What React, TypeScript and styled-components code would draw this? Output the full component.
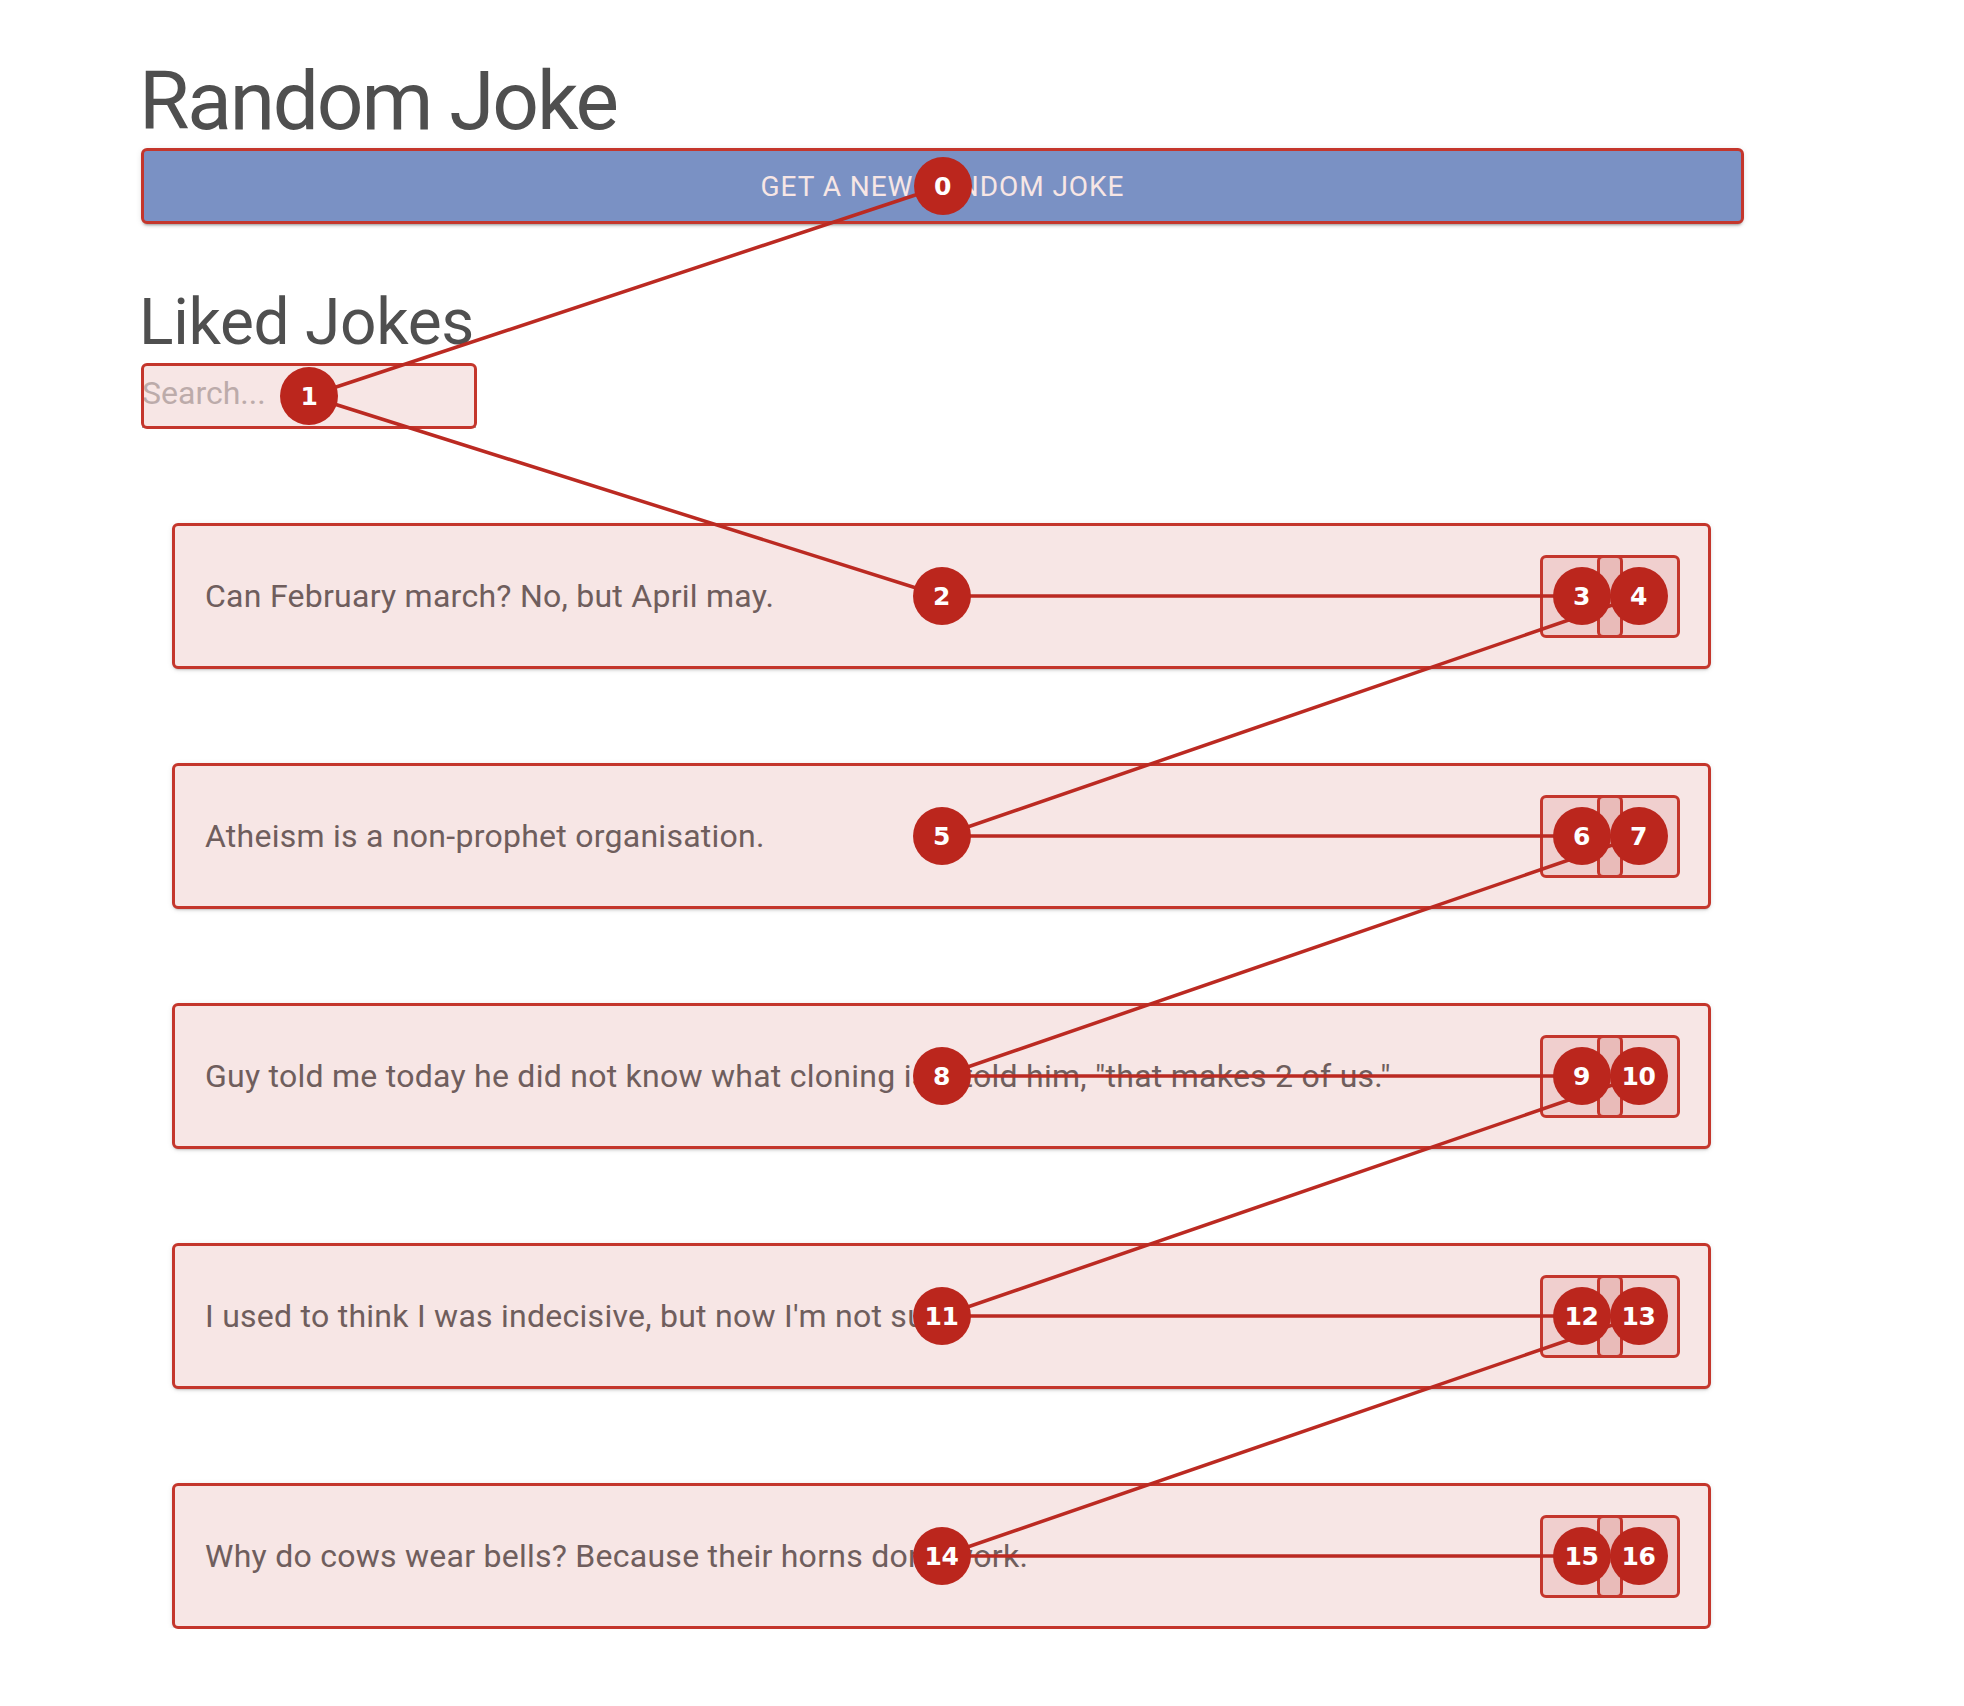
import React, { useLayoutEffect, useRef, useState } from "react";
import styled, { createGlobalStyle } from "styled-components";
import { ThumbsUp, Trash2 } from "lucide-react";

const GlobalStyle = createGlobalStyle`
  html, body { margin: 0; padding: 0; background: #ffffff; }
  body { font-family: Roboto, "Liberation Sans", Arial, sans-serif; }
  * { box-sizing: border-box; }
`;

const Page = styled.main`
  position: relative;
  width: 1743px;
  padding: 54px 0 0 142px;
`;

const Title = styled.h1`
  margin: 0 0 0 -3px;
  font-family: Roboto, "Liberation Sans", sans-serif;
  font-weight: 400;
  font-size: 82px;
  line-height: 95px;
  letter-spacing: -2.2px;
  color: #4f4f4f;
`;

const JokeButton = styled.button`
  display: block;
  width: 100%;
  height: 74px;
  border: 0;
  border-radius: 5px;
  background: #73a0da;
  color: #ffffff;
  font-family: Roboto, "Liberation Sans", sans-serif;
  font-weight: 400;
  font-size: 28px;
  letter-spacing: 0.95px;
  text-transform: uppercase;
  cursor: pointer;
  box-shadow: 0 4px 2px -2px rgba(0, 0, 0, 0.2), 0 3px 3px 0 rgba(0, 0, 0, 0.14),
    0 1px 7px 0 rgba(0, 0, 0, 0.12);
`;

const SectionTitle = styled.h2`
  margin: 62px 0 0 -3px;
  font-family: Roboto, "Liberation Sans", sans-serif;
  font-weight: 400;
  font-size: 64px;
  line-height: 75px;
  letter-spacing: -0.3px;
  color: #4f4f4f;
`;

const SearchField = styled.div`
  margin-top: 4px;
  width: 334px;
  height: 64px;
  border-bottom: 2px solid #a6a6a6;
  display: flex;
  align-items: center;
`;

const SearchInput = styled.input`
  width: 100%;
  height: 100%;
  border: 0;
  outline: none;
  background: transparent;
  padding: 0 0 4px 0;
  font-family: Roboto, "Liberation Sans", sans-serif;
  font-size: 32px;
  color: #444;
  &::placeholder {
    color: #bdbdbd;
  }
`;

const JokeList = styled.ul`
  list-style: none;
  margin: 0;
  padding: 0 33px 0 31px;
`;

const JokeCard = styled.li`
  margin-top: 96px;
  height: 144px;
  display: flex;
  align-items: center;
  padding: 0 31px 0 32px;
  background: #ffffff;
  border-radius: 5px;
  box-shadow: 0 3px 2px -2px rgba(0, 0, 0, 0.2), 0 2px 3px 0 rgba(0, 0, 0, 0.14),
    0 1px 6px 0 rgba(0, 0, 0, 0.12);
  outline: none;
`;

const JokeText = styled.span`
  flex: 1;
  font-family: Roboto, "Liberation Sans", sans-serif;
  font-size: 32px;
  letter-spacing: 0.26px;
  color: #666666;
  white-space: nowrap;
`;

const Actions = styled.div`
  display: flex;
  align-items: center;
`;

const IconButton = styled.button`
  width: 81px;
  height: 81px;
  border: 0;
  padding: 0;
  background: transparent;
  border-radius: 50%;
  display: flex;
  align-items: center;
  justify-content: center;
  color: #757575;
  cursor: pointer;
  & + & {
    margin-left: -24px;
  }
`;

/* ---------- focus-order annotation overlay ---------- */

const OverlayLayer = styled.div`
  position: absolute;
  top: 0;
  left: 0;
  width: 0;
  height: 0;
  pointer-events: none;
`;

const TabBox = styled.div`
  position: absolute;
  border: 3px solid #c4362c;
  background: rgba(185, 38, 29, 0.115);
  border-radius: 6px;
`;

const LineLayer = styled.svg`
  position: absolute;
  top: 0;
  left: 0;
  overflow: visible;
`;

const Badge = styled.div`
  position: absolute;
  width: 58px;
  height: 58px;
  margin: -29px 0 0 -29px;
  border-radius: 50%;
  background: #bb261d;
  color: #ffffff;
  display: flex;
  align-items: center;
  justify-content: center;
  font-family: "DejaVu Sans", Verdana, sans-serif;
  font-weight: 700;
  font-size: 25px;
  letter-spacing: -0.5px;
`;

type Box = { x: number; y: number; w: number; h: number };

const FocusOrderOverlay: React.FC<{ scope: React.RefObject<HTMLElement | null> }> = ({ scope }) => {
  const [boxes, setBoxes] = useState<Box[]>([]);

  useLayoutEffect(() => {
    const measure = () => {
      const root = scope.current;
      if (!root) return;
      const els = Array.from(root.querySelectorAll<HTMLElement>("[data-tab]"));
      setBoxes(
        els.map((el) => {
          const r = el.getBoundingClientRect();
          return { x: r.left + window.scrollX, y: r.top + window.scrollY, w: r.width, h: r.height };
        })
      );
    };
    measure();
    window.addEventListener("resize", measure);
    const t = window.setTimeout(measure, 50);
    return () => {
      window.removeEventListener("resize", measure);
      window.clearTimeout(t);
    };
  }, [scope]);

  const centers = boxes.map((b) => ({ cx: b.x + b.w / 2, cy: b.y + b.h / 2 }));
  const pad = 1;

  return (
    <OverlayLayer>
      {boxes.map((b, i) => (
        <TabBox
          key={`b${i}`}
          style={{ left: b.x - pad, top: b.y - pad, width: b.w + pad * 2, height: b.h + pad * 2 }}
        />
      ))}
      <LineLayer width={1} height={1}>
        {centers.length > 1 && (
          <polyline
            points={centers.map((c) => `${c.cx},${c.cy}`).join(" ")}
            fill="none"
            stroke="#bb2a22"
            strokeWidth={3.5}
            strokeLinejoin="round"
          />
        )}
      </LineLayer>
      {centers.map((c, i) => (
        <Badge key={`c${i}`} style={{ left: c.cx, top: c.cy }}>
          {i}
        </Badge>
      ))}
    </OverlayLayer>
  );
};

const jokes = [
  "Can February march? No, but April may.",
  "Atheism is a non-prophet organisation.",
  'Guy told me today he did not know what cloning is. I told him, "that makes 2 of us."',
  "I used to think I was indecisive, but now I'm not sure.",
  "Why do cows wear bells? Because their horns don't work.",
];

export default function App() {
  const pageRef = useRef<HTMLElement | null>(null);
  return (
    <>
      <GlobalStyle />
      <Page ref={pageRef}>
        <Title>Random Joke</Title>
        <JokeButton data-tab>Get a new random joke</JokeButton>
        <SectionTitle>Liked Jokes</SectionTitle>
        <SearchField data-tab>
          <SearchInput placeholder="Search..." />
        </SearchField>
        <JokeList>
          {jokes.map((j) => (
            <JokeCard key={j} tabIndex={0} data-tab>
              <JokeText>{j}</JokeText>
              <Actions>
                <IconButton data-tab aria-label="like">
                  <ThumbsUp size={30} />
                </IconButton>
                <IconButton data-tab aria-label="remove">
                  <Trash2 size={30} />
                </IconButton>
              </Actions>
            </JokeCard>
          ))}
        </JokeList>
      </Page>
      <FocusOrderOverlay scope={pageRef} />
    </>
  );
}
